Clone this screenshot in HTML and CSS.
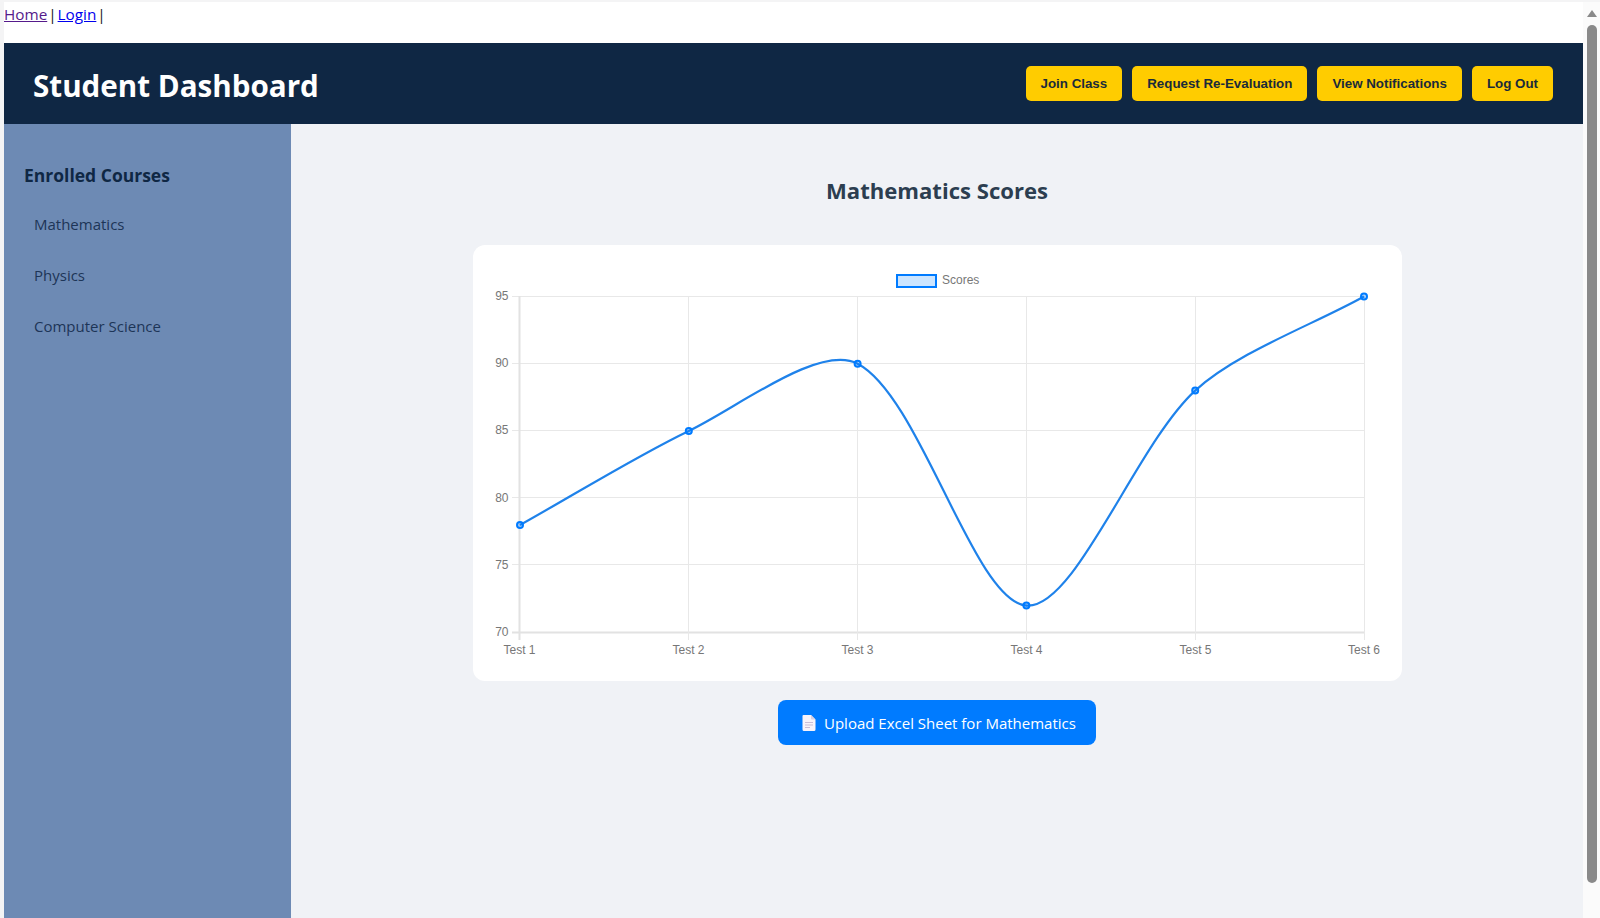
FILE: index.html

```html
<!DOCTYPE html>
<html lang="en">
<head>
  <meta charset="UTF-8" />
  <meta name="viewport" content="width=device-width, initial-scale=1.0"/>
  <title>Student Dashboard</title>
  <link rel="stylesheet" href="styles.css">
</head>
<body>
  <div class="window">
    <div class="page">
      <div class="topnav">
        <a class="visited" href="#">Home</a> | <a href="#">Login</a> |
      </div>
      <header class="header">
        <h1 class="header-title">Student Dashboard</h1>
        <div class="header-actions">
          <button class="action-btn">Join Class</button>
          <button class="action-btn">Request Re-Evaluation</button>
          <button class="action-btn">View Notifications</button>
          <button class="action-btn">Log Out</button>
        </div>
      </header>
      <div class="layout">
        <aside class="sidebar">
          <h3 class="sidebar-title">Enrolled Courses</h3>
          <ul class="course-list">
            <li class="course-item">Mathematics</li>
            <li class="course-item">Physics</li>
            <li class="course-item">Computer Science</li>
          </ul>
        </aside>
        <main class="content">
          <h2 class="content-title">Mathematics Scores</h2>
          <div class="chart-card">
            <svg class="chart" viewBox="492 265 889 396" width="889" height="396">
              <!-- legend -->
              <rect class="legend-box" x="896" y="275" width="39" height="12"/>
              <text class="tick" x="941" y="284">Scores</text>

              <!-- horizontal grid -->
              <path class="grid" d="M511 296.500H1363M511 363.500H1363M511 430.500H1363M511 497.500H1363M511 564.500H1363"/>
              <path class="axis" d="M511 632.500H1363"/>

              <!-- vertical grid -->
              <path class="grid" d="M687.500 296V640M856.500 296V640M1025.500 296V640M1194.500 296V640M1363.500 296V640"/>
              <path class="axis" d="M518.500 296V640"/>

              <text class="tick tick-y" x="507.500" y="300">95</text>
              <text class="tick tick-y" x="507.500" y="367">90</text>
              <text class="tick tick-y" x="507.500" y="434">85</text>
              <text class="tick tick-y" x="507.500" y="501.500">80</text>
              <text class="tick tick-y" x="507.500" y="569">75</text>
              <text class="tick tick-y" x="507.500" y="636">70</text>

              <text class="tick tick-x" x="518.500" y="654">Test 1</text>
              <text class="tick tick-x" x="687.500" y="654">Test 2</text>
              <text class="tick tick-x" x="856.500" y="654">Test 3</text>
              <text class="tick tick-x" x="1025.500" y="654">Test 4</text>
              <text class="tick tick-x" x="1194.500" y="654">Test 5</text>
              <text class="tick tick-x" x="1363" y="654">Test 6</text>

              <path class="line" d="M519 525C569.600 496.800 635.600 455.900 687.800 430.900C736.900 407.400 818 343.700 856.600 363.700C919.300 396.100 972.800 601.400 1025.400 605.600C1074.200 609.500 1134.900 444.900 1194.200 390.600C1236.100 352.200 1312.400 324.700 1363 296.500"/>

              <circle class="point" cx="519" cy="525" r="3"/>
              <circle class="point" cx="687.800" cy="430.900" r="3"/>
              <circle class="point" cx="856.600" cy="363.700" r="3"/>
              <circle class="point" cx="1025.400" cy="605.600" r="3"/>
              <circle class="point" cx="1194.200" cy="390.600" r="3"/>
              <circle class="point" cx="1363" cy="296.500" r="3"/>
            </svg>
          </div>
          <button class="upload-btn">
            <svg class="upload-icon" viewBox="0 0 16 18" width="16" height="18">
              <path fill="#f7f3fa" d="M2.500 1H10L14.500 5.500V15.500A1.500 1.500 0 0 1 13 17H3A1.500 1.500 0 0 1 1.500 15.500V2A1 1 0 0 1 2.500 1Z"/>
              <path fill="#d9cfe2" d="M10 1L14.500 5.500H10.800A.8 .8 0 0 1 10 4.700Z"/>
              <path stroke="#c9bdd6" stroke-width="1.200" d="M4 8.500H12M4 11H12M4 13.500H9"/>
            </svg>
            Upload Excel Sheet for Mathematics
          </button>
        </main>
      </div>
    </div>
    <div class="scrollbar">
      <div class="scroll-arrow"></div>
      <div class="scroll-thumb"></div>
    </div>
  </div>
</body>
</html>
```

FILE: styles.css

```css
html, body {
  margin: 0;
  padding: 0;
  height: 100%;
  overflow: hidden;
  background-color: #f4f4f5;
  font-family: "Open Sans", "Noto Sans", sans-serif;
}

.window {
  display: flex;
  height: 916px;
  margin-top: 2px;
  padding-left: 4px;
}

.page {
  flex: 1;
  display: flex;
  flex-direction: column;
  min-width: 0;
  background: white;
}

.topnav {
  height: 41px;
  font-size: 15.300px;
  line-height: 24px;
  word-spacing: -3px;
  color: #222;
}

.topnav a {
  color: #0000ee;
}

.topnav a.visited {
  color: #551a8b;
}

.header {
  display: flex;
  align-items: center;
  justify-content: space-between;
  height: 81px;
  padding: 0 30px;
  box-sizing: border-box;
  background-color: #0f2744;
  color: white;
}

.header-title {
  margin: 3px 0 0 -1px;
  font-size: 29.600px;
  font-weight: 700;
}

.header-actions {
  display: flex;
  gap: 10px;
}

.action-btn {
  height: 35px;
  padding: 0 15px;
  border: none;
  border-radius: 5px;
  background-color: #ffcc00;
  color: #1a2a3a;
  font-family: "Liberation Sans", Arial, sans-serif;
  font-size: 13.333px;
  font-weight: 700;
}

.layout {
  flex: 1;
  display: flex;
  min-height: 0;
}

.sidebar {
  width: 287px;
  flex-shrink: 0;
  padding: 39px 20px;
  box-sizing: border-box;
  background-color: #6d8ab4;
}

.sidebar-title {
  margin: 0 0 12px;
  font-size: 17.500px;
  line-height: 24px;
  font-weight: 700;
  color: #0f2744;
}

.course-list {
  margin: 0;
  padding: 0;
  list-style: none;
}

.course-item {
  padding: 15px 10px;
  font-size: 15px;
  line-height: 21px;
  color: #1d3557;
}

.content {
  flex: 1;
  display: flex;
  flex-direction: column;
  align-items: center;
  background-color: #f0f2f6;
}

.content-title {
  margin: 50px 0 38px;
  font-size: 22.100px;
  line-height: 33px;
  font-weight: 700;
  color: #2c3e50;
}

.chart-card {
  width: 929px;
  padding: 20px;
  box-sizing: border-box;
  border-radius: 12px;
  background: white;
}

.chart {
  display: block;
}

.legend-box {
  fill: rgba(0, 123, 255, 0.2);
  stroke: #007bff;
  stroke-width: 2;
}

.tick {
  font-family: "Liberation Sans", Arial, sans-serif;
  font-size: 12px;
  fill: #777;
}

.tick-y {
  text-anchor: end;
}

.tick-x {
  text-anchor: middle;
}

.grid {
  fill: none;
  stroke: #e8e8e8;
  stroke-width: 1;
}

.axis {
  fill: none;
  stroke: #e2e2e2;
  stroke-width: 2;
}

.line {
  fill: none;
  stroke: #1f82ea;
  stroke-width: 2.200;
}

.point {
  fill: rgba(0, 123, 255, 0.3);
  stroke: #007bff;
  stroke-width: 2;
}

.upload-btn {
  display: flex;
  align-items: center;
  gap: 7px;
  width: 318px;
  height: 45px;
  margin-top: 19px;
  padding: 0 0 0 23px;
  box-sizing: border-box;
  border: none;
  border-radius: 8px;
  background-color: #007bff;
  color: white;
  font-family: "Open Sans", "Noto Sans", sans-serif;
  font-size: 15px;
}

.upload-icon {
  flex-shrink: 0;
}

.scrollbar {
  position: relative;
  width: 17px;
  flex-shrink: 0;
  background-color: #fbfbfb;
}

.scroll-arrow {
  width: 0;
  height: 0;
  margin: 8px auto 0;
  border-left: 5px solid transparent;
  border-right: 5px solid transparent;
  border-bottom: 7px solid #8a8a8a;
}

.scroll-thumb {
  width: 10px;
  height: 858px;
  margin: 8px auto 0;
  border-radius: 5px;
  background-color: #8a8a8a;
}
```
